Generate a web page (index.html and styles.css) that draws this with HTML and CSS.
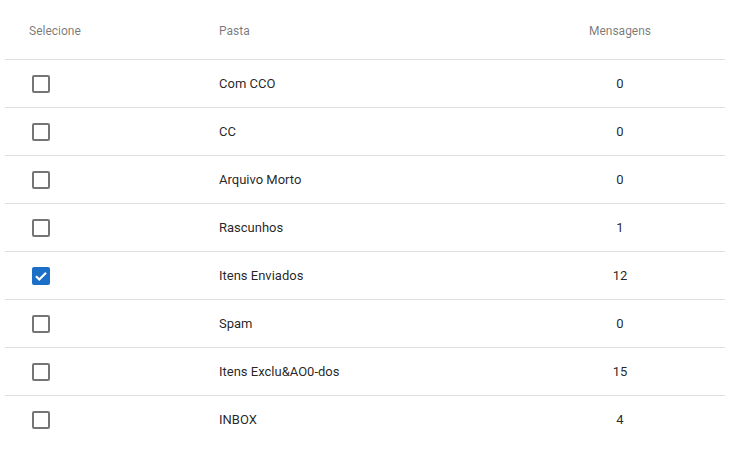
FILE: index.html
```html
<!DOCTYPE html>
<html lang="pt">
<head>
<meta charset="utf-8">
<link rel="stylesheet" href="styles.css">
</head>
<body>
<div class="table">
  <div class="row head">
    <div class="c1">Selecione</div>
    <div class="c2">Pasta</div>
    <div class="c3">Mensagens</div>
  </div>
  <div class="row"><div class="c1"><span class="cb"></span></div><div class="c2">Com CCO</div><div class="c3">0</div></div>
  <div class="row"><div class="c1"><span class="cb"></span></div><div class="c2">CC</div><div class="c3">0</div></div>
  <div class="row"><div class="c1"><span class="cb"></span></div><div class="c2">Arquivo Morto</div><div class="c3">0</div></div>
  <div class="row"><div class="c1"><span class="cb"></span></div><div class="c2">Rascunhos</div><div class="c3">1</div></div>
  <div class="row"><div class="c1"><span class="cb checked"><svg viewBox="0 0 18 18" width="18" height="18"><path d="M4 9.2l3.3 3.3L14 5.8" fill="none" stroke="#fff" stroke-width="2.2"/></svg></span></div><div class="c2">Itens Enviados</div><div class="c3">12</div></div>
  <div class="row"><div class="c1"><span class="cb"></span></div><div class="c2">Spam</div><div class="c3">0</div></div>
  <div class="row"><div class="c1"><span class="cb"></span></div><div class="c2">Itens Exclu&amp;AO0-dos</div><div class="c3">15</div></div>
  <div class="row last"><div class="c1"><span class="cb"></span></div><div class="c2">INBOX</div><div class="c3">4</div></div>
</div>
</body>
</html>
```

FILE: styles.css
```css
html, body {
  margin: 0;
  padding: 0;
  background: #fff;
}
body {
  font-family: Roboto, "Liberation Sans", sans-serif;
  color: rgba(0, 0, 0, 0.87);
}
.table {
  margin: 3px 15px 0 5px;
  width: 720px;
}
.row {
  display: grid;
  grid-template-columns: 214px 321px 160px 25px;
  align-items: center;
  height: 47px;
  border-bottom: 1px solid #e0e0e0;
  font-size: 13px;
}
.row.head {
  height: 56px;
  font-size: 12px;
  color: rgba(0, 0, 0, 0.54);
}
.row.last {
  border-bottom: none;
}
.c1 {
  padding-left: 24px;
  display: flex;
  align-items: center;
}
.c3 {
  text-align: center;
}
.cb {
  display: block;
  box-sizing: border-box;
  width: 18px;
  height: 18px;
  margin-left: 3px;
  border: 2px solid rgba(0, 0, 0, 0.54);
  border-radius: 2px;
}
.cb.checked {
  border: none;
  background: #1b6fc6;
}
.cb svg {
  display: block;
}
```
